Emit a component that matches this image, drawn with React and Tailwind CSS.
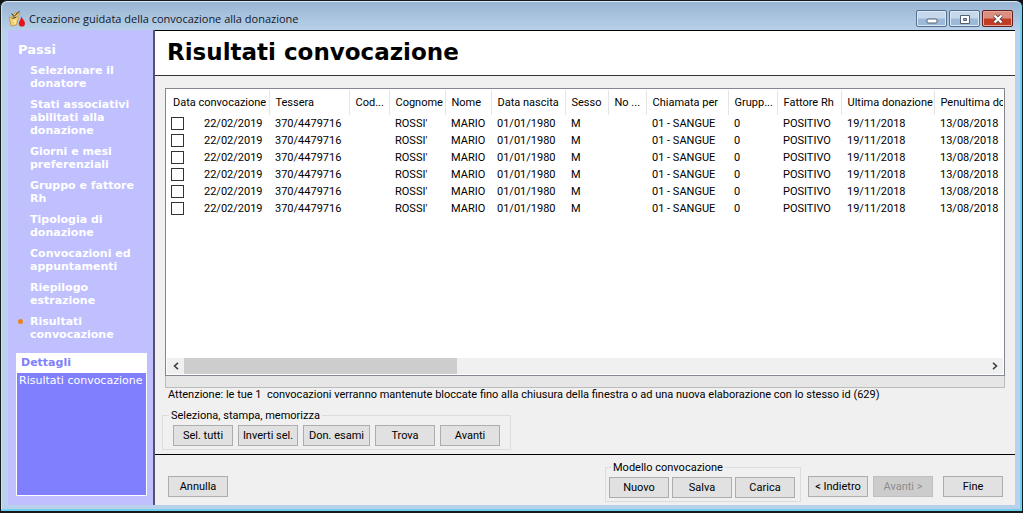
import React, { useState } from "react";

const passi = [
  "Selezionare il donatore",
  "Stati associativi abilitati alla donazione",
  "Giorni e mesi preferenziali",
  "Gruppo e fattore Rh",
  "Tipologia di donazione",
  "Convocazioni ed appuntamenti",
  "Riepilogo estrazione",
  "Risultati convocazione",
];

const colonne = [
  { titolo: "Data convocazione", campo: "data", width: "w-[102px]" },
  { titolo: "Tessera", campo: "tessera", width: "w-[80px]" },
  { titolo: "Cod...", campo: "codice", width: "w-[40px]" },
  { titolo: "Cognome", campo: "cognome", width: "w-[56px]" },
  { titolo: "Nome", campo: "nome", width: "w-[46px]" },
  { titolo: "Data nascita", campo: "nascita", width: "w-[74px]" },
  { titolo: "Sesso", campo: "sesso", width: "w-[43px]" },
  { titolo: "No ...", campo: "note", width: "w-[38px]" },
  { titolo: "Chiamata per", campo: "chiamata", width: "w-[82px]" },
  { titolo: "Grupp...", campo: "gruppo", width: "w-[49px]" },
  { titolo: "Fattore Rh", campo: "fattore", width: "w-[64px]" },
  { titolo: "Ultima donazione", campo: "ultima", width: "w-[93px]" },
  { titolo: "Penultima donazione", campo: "penultima", width: "w-[120px]" },
];

const donatore = {
  data: "22/02/2019",
  tessera: "370/4479716",
  codice: "",
  cognome: "ROSSI'",
  nome: "MARIO",
  nascita: "01/01/1980",
  sesso: "M",
  note: "",
  chiamata: "01 - SANGUE",
  gruppo: "0",
  fattore: "POSITIVO",
  ultima: "19/11/2018",
  penultima: "13/08/2018",
};

const righe = [1, 2, 3, 4, 5, 6].map((id) => ({ id, ...donatore }));

function Bottone({ children, className = "w-[60px]", ...props }) {
  return (
    <button
      type="button"
      className={`h-[21px] shrink-0 whitespace-nowrap border border-[#adadad] bg-[#e1e1e1] text-center leading-[19px] hover:border-[#0078d7] disabled:border-[#bfbfbf] disabled:bg-[#cccccc] disabled:text-[#8c8c8c] ${className}`}
      {...props}
    >
      {children}
    </button>
  );
}

function Logo() {
  return (
    <svg className="h-[18px] w-[18px]" viewBox="0 0 18 18" aria-hidden="true">
      <path d="M1 7.500 3 7l1 1.500L6 4l1.500-2 1.200.8L8 5l3-2.500 1 .8L9.500 6.500l1.200.5L8.500 15l-5.500 1L2 11z" fill="#f4cf72" stroke="#b98a34" strokeWidth=".7" />
      <path d="M3.500 3.500 6 6.500 11.500 1M4.500 8.500l4-1.500" fill="none" stroke="#3d3424" strokeWidth="1" />
      <path d="m5 10.500 2.500.3L7 14" fill="none" stroke="#fff0b5" strokeWidth="1.200" />
      <path d="M13.500 6c.4 3 3.500 4.500 3.500 7.500a3.100 3.100 0 0 1-6.200 0C10.800 11 13.200 9.500 13.500 6z" fill="#e5141b" />
    </svg>
  );
}

function BarraTitolo() {
  const stile =
    "flex h-[17px] items-center justify-center rounded-[2px] border border-[#54708f] bg-linear-to-b from-[#c5d8ec] from-45% to-[#9db9d8] to-55% shadow-[inset_0_0_0_1px_#dbe8f5]";
  return (
    <header className="flex h-[29px] shrink-0 items-center justify-between">
      <div className="flex items-center gap-[3px] pt-[6px]">
        <Logo />
        <span className="font-['Open_Sans','Noto_Sans',sans-serif] text-[11px] leading-4 text-[#101828]">
          Creazione guidata della convocazione alla donazione
        </span>
      </div>
      <div className="flex gap-[2px] pt-[6px] pr-[2px]">
        <button type="button" aria-label="Riduci a icona" className={`w-[31px] ${stile}`}>
          <svg className="h-3 w-3" viewBox="0 0 12 12">
            <rect x="1" y="6" width="10" height="4" rx="1" fill="#fff" stroke="#53606f" />
          </svg>
        </button>
        <button type="button" aria-label="Ingrandisci" className={`w-[31px] ${stile}`}>
          <svg className="h-3 w-3" viewBox="0 0 12 12">
            <path fillRule="evenodd" d="M1.500 2.500h9v8h-9zM4.500 5.500v2h3v-2z" fill="#fff" stroke="#53606f" />
          </svg>
        </button>
        <button
          type="button"
          aria-label="Chiudi"
          className="flex h-[17px] w-[31px] items-center justify-center rounded-[2px] border border-[#5e2020] bg-linear-to-b from-[#dc8f80] from-45% to-[#c23c24] to-55% shadow-[inset_0_0_0_1px_#e9a798]"
        >
          <svg className="h-3 w-3" viewBox="0 0 12 12">
            <path d="m2.500 2.500 7 7m0-7-7 7" stroke="#5c4a4e" strokeWidth="4" />
            <path d="m2.500 2.500 7 7m0-7-7 7" stroke="#fff" strokeWidth="2.200" />
          </svg>
        </button>
      </div>
    </header>
  );
}

function Passi() {
  return (
    <aside className="flex w-[147px] shrink-0 flex-col border-r-2 border-[#55516e] bg-[#c0c0ff] pr-[6px] pb-[9px] pl-2 font-['DejaVu_Sans',Verdana,sans-serif] text-[11px] leading-[13px] text-white">
      <h2 className="mt-3 pl-[2px] text-[13px] font-bold leading-4">Passi</h2>
      <ol className="mt-[6px] flex flex-col gap-2 font-bold">
        {passi.map((passo, i) => (
          <li key={passo} className="flex pl-[2px]">
            <span className="w-3 shrink-0 pt-1">
              {i === passi.length - 1 && <span className="block h-[5px] w-[5px] rounded-full bg-[#e8821e]" />}
            </span>
            <span className="w-[108px]">{passo}</span>
          </li>
        ))}
      </ol>
      <section className="mt-3 flex flex-1 flex-col border border-white bg-[#8080ff]">
        <h3 className="bg-white px-1 pt-[2px] pb-1 font-bold text-[#8080ff]">Dettagli</h3>
        <p className="whitespace-nowrap px-[2px] pt-px">Risultati convocazione</p>
      </section>
    </aside>
  );
}

function Tabella({ selezionati, onToggle }) {
  return (
    <div className="flex min-h-[286px] flex-1 flex-col border border-[#828790] bg-white p-px">
      <div className="flex-1 overflow-hidden">
        <table className="w-[887px] table-fixed border-collapse text-left">
          <thead>
            <tr className="h-[25px]">
              {colonne.map((col) => (
                <th
                  key={col.campo}
                  scope="col"
                  className={`${col.width} whitespace-nowrap border-r border-[#e5e5e5] p-0 pl-[6px] font-normal`}
                >
                  {col.titolo}
                </th>
              ))}
            </tr>
          </thead>
          <tbody>
            {righe.map((riga) => (
              <tr key={riga.id} className="h-[17px]">
                {colonne.map((col) => (
                  <td key={col.campo} className="whitespace-nowrap p-0 pl-[6px] leading-[17px]">
                    {col.campo === "data" ? (
                      <label className="-ml-[2px] flex items-center gap-5">
                        <input
                          type="checkbox"
                          checked={selezionati.includes(riga.id)}
                          onChange={() => onToggle(riga.id)}
                          className="h-[13px] w-[13px] appearance-none border border-[#333333] bg-white checked:bg-[#333333]"
                        />
                        {riga.data}
                      </label>
                    ) : (
                      riga[col.campo]
                    )}
                  </td>
                ))}
              </tr>
            ))}
          </tbody>
        </table>
      </div>
      <div className="flex h-[16px] bg-[#f0f0f0]">
        <button type="button" aria-label="Scorri a sinistra" className="flex w-[17px] items-center justify-center">
          <svg className="h-2 w-2" viewBox="0 0 8 8">
            <path d="M6 .8 2.500 4 6 7.200" fill="none" stroke="#404040" strokeWidth="1.600" />
          </svg>
        </button>
        <div className="flex-1">
          <div className="h-full w-[34%] bg-[#cdcdcd]" />
        </div>
        <button type="button" aria-label="Scorri a destra" className="flex w-[17px] items-center justify-center">
          <svg className="h-2 w-2" viewBox="0 0 8 8">
            <path d="M2 .8 5.500 4 2 7.200" fill="none" stroke="#404040" strokeWidth="1.600" />
          </svg>
        </button>
      </div>
    </div>
  );
}

export default function App() {
  const [selezionati, setSelezionati] = useState([]);

  const toggle = (id) => {
    setSelezionati((prev) => (prev.includes(id) ? prev.filter((x) => x !== id) : [...prev, id]));
  };

  const invertiSelezione = () => {
    setSelezionati(righe.map((r) => r.id).filter((id) => !selezionati.includes(id)));
  };

  return (
    <div className="flex min-h-screen bg-[#101418] font-[Roboto,'Liberation_Sans',sans-serif] text-[11px] leading-[13px] text-black">
      {/* Cornice della finestra */}
      <div className="flex min-w-0 flex-1 flex-col rounded-t-[7px] border border-b-2 border-[#15181c] bg-[#b9d1ea] bg-linear-to-b from-[#98b4d2] to-[#b9d1ea] to-[30px] px-[7px] pb-[6px] shadow-[inset_0_1px_0_#dcebf8,inset_-2px_-2px_0_#6fd0ee,inset_1px_0_0_#c9e4f2]">
        <BarraTitolo />
        <div className="flex flex-1">
          <Passi />

          <main className="flex min-w-0 flex-1 flex-col border-t border-black bg-[#f0f0f0]">
            <div className="border-b border-[#333333] bg-white pt-[5px] pb-[7px] pl-3">
              <h1 className="font-['DejaVu_Sans',Verdana,sans-serif] text-[23px] font-bold leading-8">
                Risultati convocazione
              </h1>
            </div>

            <div className="flex flex-1 flex-col pt-3 pr-[10px] pb-1 pl-[10px]">
              <Tabella selezionati={selezionati} onToggle={toggle} />
              <div className="h-3 border border-[#bcbcbc] border-t-0 bg-[#e6e6e6]" />
              <p className="whitespace-pre pl-[3px]">
                {"Attenzione: le tue 1  convocazioni verranno mantenute bloccate fino alla chiusura della finestra o ad una nuova elaborazione con lo stesso id (629)"}
              </p>

              <fieldset className="mt-2 -ml-[3px] flex w-fit gap-[5px] border border-[#dcdcdc] pt-[3px] pr-[10px] pb-[3px] pl-[10px]">
                <legend className="-ml-1 px-[2px]">Seleziona, stampa, memorizza</legend>
                <Bottone onClick={() => setSelezionati(righe.map((r) => r.id))}>Sel. tutti</Bottone>
                <Bottone onClick={invertiSelezione}>Inverti sel.</Bottone>
                <Bottone className="w-[67px]">Don. esami</Bottone>
                <Bottone>Trova</Bottone>
                <Bottone>Avanti</Bottone>
              </fieldset>
            </div>

            <footer className="flex items-end border-t border-black pt-[6px] pr-3 pb-[3px] pl-[13px]">
              <Bottone className="mb-[5px] w-[60px]">Annulla</Bottone>
              <fieldset className="ml-auto flex gap-[3px] border border-[#dcdcdc] pt-[3px] pr-[5px] pb-[3px] pl-[3px]">
                <legend className="ml-[2px] px-[2px]">Modello convocazione</legend>
                <Bottone>Nuovo</Bottone>
                <Bottone>Salva</Bottone>
                <Bottone>Carica</Bottone>
              </fieldset>
              <div className="mb-[5px] ml-[7px] flex gap-[5px]">
                <Bottone>&lt; Indietro</Bottone>
                <Bottone disabled>Avanti &gt;</Bottone>
              </div>
              <Bottone className="mb-[5px] ml-[10px] w-[60px]">Fine</Bottone>
            </footer>
          </main>
        </div>
      </div>
    </div>
  );
}
